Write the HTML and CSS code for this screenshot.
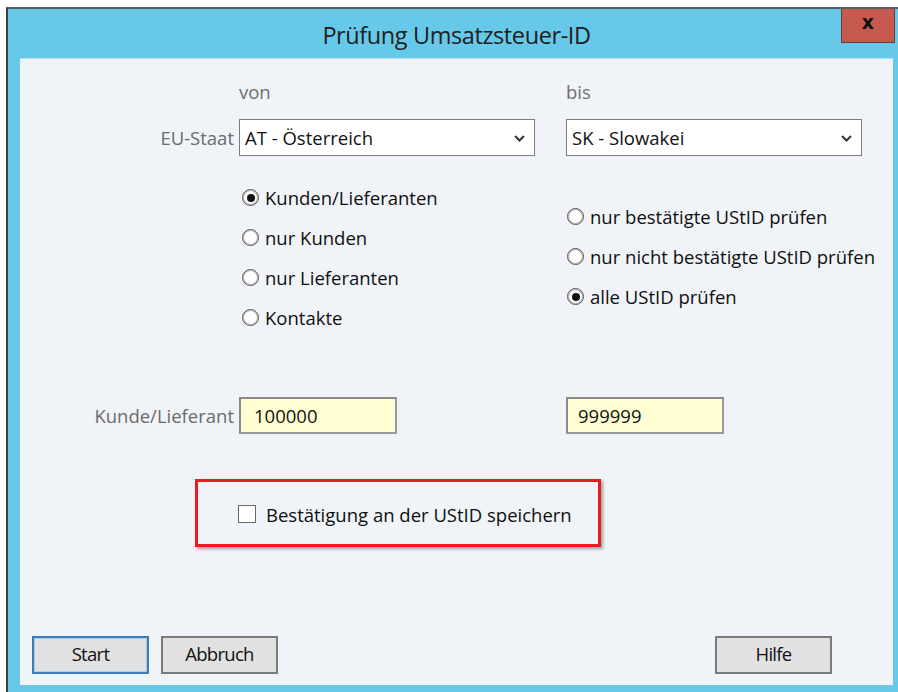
FILE: index.html
```html
<!DOCTYPE html>
<html lang="de">
<head>
<meta charset="utf-8">
<title>Prüfung Umsatzsteuer-ID</title>
<link rel="stylesheet" href="styles.css">
</head>
<body>
<div class="window">
  <div class="titlebar">
    <span class="title">Prüfung Umsatzsteuer-ID</span>
    <button class="close" type="button">x</button>
  </div>
  <div class="client">
    <div class="grid">
      <div class="label"></div>
      <div class="head">von</div>
      <div class="head">bis</div>

      <div class="label row-select">EU-Staat</div>
      <div class="select">
        <span>AT - Österreich</span>
        <svg class="chev" width="11" height="7" viewBox="0 0 11 7"><path d="M1 1 L5.5 5.5 L10 1" fill="none" stroke="#333" stroke-width="2"/></svg>
      </div>
      <div class="select">
        <span>SK - Slowakei</span>
        <svg class="chev" width="11" height="7" viewBox="0 0 11 7"><path d="M1 1 L5.5 5.5 L10 1" fill="none" stroke="#333" stroke-width="2"/></svg>
      </div>

      <div class="label"></div>
      <div class="radios">
        <div class="radio checked"><span class="dot"></span>Kunden/Lieferanten</div>
        <div class="radio"><span class="dot"></span>nur Kunden</div>
        <div class="radio"><span class="dot"></span>nur Lieferanten</div>
        <div class="radio"><span class="dot"></span>Kontakte</div>
      </div>
      <div class="radios right">
        <div class="radio"><span class="dot"></span>nur bestätigte UStID prüfen</div>
        <div class="radio"><span class="dot"></span>nur nicht bestätigte UStID prüfen</div>
        <div class="radio checked"><span class="dot"></span>alle UStID prüfen</div>
      </div>

      <div class="label row-input">Kunde/Lieferant</div>
      <div class="input first">100000</div>
      <div class="input">999999</div>
    </div>

    <div class="highlight">
      <span class="check"></span>
      <span>Bestätigung an der UStID speichern</span>
    </div>

    <div class="buttons">
      <button class="btn default" type="button">Start</button>
      <button class="btn" type="button">Abbruch</button>
      <span class="spacer"></span>
      <button class="btn" type="button">Hilfe</button>
    </div>
  </div>
</div>
</body>
</html>
```

FILE: styles.css
```css
html, body {
  margin: 0;
  padding: 0;
  background: #ffffff;
  overflow: hidden;
}

body {
  font-family: "Open Sans", "Noto Sans", sans-serif;
  font-size: 18.5px;
  color: #0f0f0f;
}

.window {
  margin: 7px 0 0 6px;
  border-top: 2px solid #5a5f63;
  border-left: 2px solid #3b3f42;
  background: #67c9e9;
  padding: 0 5px 7px 12px;
  position: relative;
}

.titlebar {
  height: 49px;
  display: flex;
  align-items: center;
  justify-content: center;
}

.title {
  font-size: 23.5px;
  color: #202020;
  letter-spacing: -0.4px;
  margin-top: 2px;
  margin-left: 0;
}

.close {
  position: absolute;
  top: 0;
  right: 3px;
  width: 54px;
  height: 34px;
  background: #c65a4e;
  border: 1px solid #6e3c35;
  border-top: none;
  font-family: "DejaVu Sans", sans-serif;
  font-weight: bold;
  font-size: 19px;
  color: #111;
  padding: 0 0 6px 0;
  line-height: 1;
}

.client {
  background: #f0f4f8;
  height: 627px;
  display: flex;
  flex-direction: column;
  border-top: 1px solid #b9dff0;
  box-sizing: border-box;
}

.grid {
  display: grid;
  grid-template-columns: 219px 327px 1fr;
  margin-top: 21px;
}

.label {
  color: #6b6b6b;
  text-align: right;
  padding-right: 5px;
  display: flex;
  align-items: center;
  justify-content: flex-end;
}

.head {
  color: #6e6e6e;
  height: 24px;
  line-height: 24px;
  margin-bottom: 15px;
}

.select {
  width: 296px;
  height: 37px;
  box-sizing: border-box;
  border: 1px solid #7d7d7d;
  background: #fff;
  display: flex;
  align-items: center;
  justify-content: space-between;
  padding: 0 9px 0 5px;
  color: #111;
}

.chev {
  margin-top: 1px;
}

.radios {
  padding-top: 21px;
}

.radios.right {
  padding-top: 40px;
}

.radio {
  height: 40px;
  display: flex;
  align-items: center;
  gap: 6px;
  padding-left: 3px;
}

.radios.right .radio {
  padding-left: 1px;
}

/* radio ring: dark outer edge with a soft grey inner ring */
.dot {
  width: 17px;
  height: 17px;
  box-sizing: border-box;
  border: 1px solid #555;
  border-radius: 50%;
  background: radial-gradient(circle, #fff 50%, #ececec 100%);
  box-shadow: inset 0 0 0 1px #b8b8b8;
  display: flex;
  align-items: center;
  justify-content: center;
  margin-top: 1px;
  flex: none;
}

.radio.checked .dot::after {
  content: "";
  width: 8px;
  height: 8px;
  border-radius: 50%;
  background: #111;
}

.row-input {
  margin-top: 60px;
  height: 36px;
}

.input {
  margin-top: 60px;
  width: 158px;
  height: 37px;
  box-sizing: border-box;
  border: 2px solid #8a8a8a;
  border-right-color: #9a9a9a;
  border-bottom-color: #9a9a9a;
  background: #ffffd3;
  display: flex;
  align-items: center;
  padding-left: 10px;
  color: #111;
}

.input.first {
  padding-left: 13px;
}

.highlight {
  margin: 45px 0 0 175px;
  width: 406px;
  height: 68px;
  box-sizing: border-box;
  border: 3px solid #ea1c22;
  box-shadow: 2px 2px 3px rgba(0, 0, 0, 0.35);
  display: flex;
  align-items: center;
  gap: 10px;
  padding-left: 40px;
  padding-top: 2px;
}

.check {
  width: 18px;
  height: 18px;
  box-sizing: border-box;
  border: 1px solid #6a6a6a;
  background: #fff;
  flex: none;
}

.buttons {
  margin-top: auto;
  margin-bottom: 11px;
  display: flex;
  gap: 12px;
  padding-left: 12px;
  padding-right: 61px;
}

.spacer {
  flex: 1;
}

.btn {
  width: 117px;
  height: 38px;
  box-sizing: border-box;
  background: #e1e1e1;
  border: 2px solid #7a7a7a;
  font-family: "Open Sans", "Noto Sans", sans-serif;
  font-size: 18.5px;
  letter-spacing: -0.7px;
  color: #111;
  padding: 0 0 3px 0;
}

.btn.default {
  border: 2px solid #3d7db5;
  box-shadow: inset 0 0 0 1px #a9cbe6;
}
```
